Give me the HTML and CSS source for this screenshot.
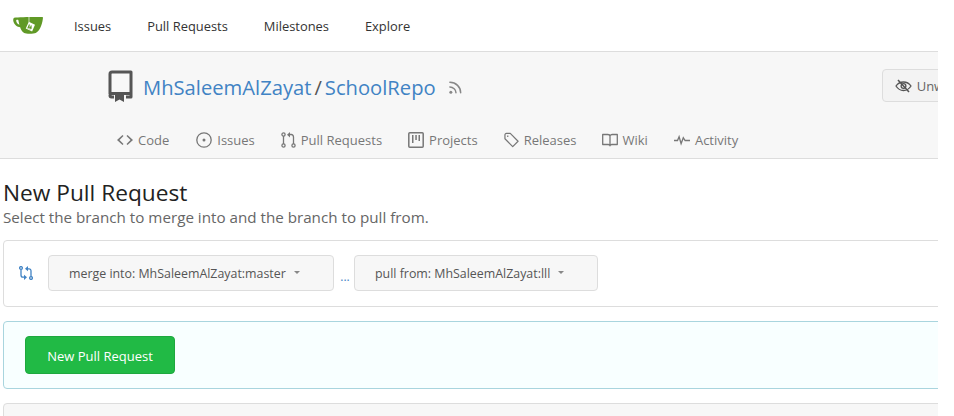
FILE: index.html
```html
<!DOCTYPE html>
<html lang="en">
<head>
<meta charset="utf-8">
<title>New Pull Request</title>
<link rel="stylesheet" href="styles.css">
</head>
<body>
<div class="page">
  <nav class="topbar">
    <svg class="logo" viewBox="0 0 32 20" width="31" height="20">
      <path fill="#609926" d="M1.200 1.600C6 .9 24 .6 31 .9c-.4 5-2.400 13.600-7.500 16.300-2 1-10 1.200-12 0C9 15.700 8 13 7.400 11.300 4.500 10.900 1 8.800.3 4.800.100 3.300.300 2 1.200 1.600z"/>
      <path fill="#fff" d="M3.300 3.800c1-.2 1.800-.1 2.200-.1.200 1.500.700 3.300 1.100 5-2-.5-3.500-2.600-3.300-4.900z"/>
      <path fill="none" stroke="#fff" stroke-width=".7" d="M16.500 0v6"/>
      <path fill="#fff" d="M16.300 5.600l6.400 3-3 7-6.500-3z"/>
      <path fill="none" stroke="#609926" stroke-width="1.200" d="M17 8.500l-1.700 4M19 9.500l-1.700 4M16 10.700l3.500 1.600"/>
    </svg>
    <a class="top-link">Issues</a>
    <a class="top-link">Pull Requests</a>
    <a class="top-link">Milestones</a>
    <a class="top-link">Explore</a>
  </nav>

  <header class="repo-head">
    <div class="repo-row">
      <svg class="repo-icon" viewBox="0 0 26 32" width="26" height="32">
        <path fill="none" stroke="#555" stroke-width="3" stroke-linejoin="round" d="M3 24V4a2 2 0 0 1 2-2h19v25h-5M7 27H4.500A1.500 1.500 0 0 1 3 25.500 2 2 0 0 1 5 23.500h19"/>
        <path fill="#555" d="M8 24h9v8l-4.500-2.500L8 32z"/>
      </svg>
      <h2 class="repo-title"><a class="repo-link">MhSaleemAlZayat</a><span class="slash">/</span><a class="repo-link">SchoolRepo</a></h2>
      <svg class="rss" viewBox="0 0 16 16" width="15" height="15">
        <g fill="none" stroke="#888" stroke-width="1.600" stroke-linecap="round">
          <path d="M2 2.500c6.500 0 11.500 5 11.500 11"/>
          <path d="M2 7.500c3.500 0 6.500 3 6.500 6"/>
        </g>
        <circle cx="3" cy="13" r="1.600" fill="#888"/>
      </svg>
      <button class="watch" type="button">
        <svg viewBox="0 0 17 14" width="17" height="14">
          <g fill="none" stroke="#555" stroke-width="1.300">
            <path d="M1 7s2.800-4 7.500-4S16 7 16 7s-2.800 4.500-7.500 4.500S1 7 1 7z"/>
            <circle cx="8.500" cy="7" r="2.400"/>
            <path d="M3 1l11 12" stroke-width="1.500"/>
          </g>
        </svg>
        <span>Unwatch</span>
      </button>
    </div>
    <div class="tabs">
      <a class="tab"><svg class="tab-icon" viewBox="0 0 16 16" width="16" height="16"><path fill="#777" d="M10.500 3L9.500 4l4 4-4 4 1 1L16 8zM5.500 3L0 8l5.500 5 1-1-4-4 4-4z"/></svg>Code</a>
      <a class="tab"><svg class="tab-icon" viewBox="0 0 16 16" width="16" height="16"><circle cx="8" cy="8" r="7.200" fill="none" stroke="#777" stroke-width="1.300"/><circle cx="8" cy="8" r="1.500" fill="#777"/></svg>Issues</a>
      <a class="tab"><svg class="tab-icon" viewBox="0 0 15 16" width="15" height="16"><g fill="none" stroke="#777" stroke-width="1.300"><circle cx="2.500" cy="2.500" r="1.600"/><circle cx="2.500" cy="13.500" r="1.600"/><circle cx="12.500" cy="13.500" r="1.600"/><path d="M2.500 4v8M12.500 12V5c0-1.500-1-2.500-2.200-2.500H8.500"/></g><path fill="#777" d="M9 0v5.500L6 2.700z"/></svg>Pull Requests</a>
      <a class="tab"><svg class="tab-icon" viewBox="0 0 16 16" width="16" height="16"><rect x=".8" y=".8" width="14.400" height="14.400" rx="1" fill="none" stroke="#777" stroke-width="1.500"/><path d="M4 3h1.500v8H4zM7.300 3h1.500v5H7.300zM10.500 3H12v6h-1.500z" fill="#777"/></svg>Projects</a>
      <a class="tab"><svg class="tab-icon" viewBox="0 0 16 16" width="15" height="16"><path d="M1 2.500A1.500 1.500 0 0 1 2.500 1h4.200L15 9.300 9.300 15 1 6.700zM4 3.300v1.400" fill="none" stroke="#777" stroke-width="1.300" stroke-linejoin="round"/></svg>Releases</a>
      <a class="tab"><svg class="tab-icon" viewBox="0 0 16 16" width="16" height="16"><path d="M.7 2.500h5c1.300 0 2.300.6 2.300 1.800 0-1.200 1-1.800 2.300-1.800h5v10h-5.500c-1 0-1.800.4-1.800 1.300 0-.9-.8-1.300-1.800-1.300H.7zM8 4.300v9.500" fill="none" stroke="#777" stroke-width="1.300" stroke-linejoin="round"/></svg>Wiki</a>
      <a class="tab"><svg class="tab-icon" viewBox="0 0 16 16" width="16" height="16"><path d="M0 8.500h3.500l1.600-3.800 2 7 2.200-6 1.800 2.800H16" fill="none" stroke="#777" stroke-width="1.300"/></svg>Activity</a>
    </div>
  </header>

  <main class="content">
    <h1 class="title">New Pull Request</h1>
    <p class="subtitle">Select the branch to merge into and the branch to pull from.</p>

    <section class="box compare">
      <svg class="compare-icon" viewBox="0 0 14 14" width="14" height="14">
        <g fill="none" stroke="#4183c4" stroke-width="1.300">
          <circle cx="2" cy="2" r="1.400"/><circle cx="12" cy="12" r="1.400"/>
          <path d="M2 3.400V9c0 1.500.8 2.200 2 2.200h1.500M12 10.600V5c0-1.500-.8-2.200-2-2.200H8.500"/>
        </g>
        <path fill="#4183c4" d="M5 8.700V14l3-2.700zM9 0v5.300L6 2.700z"/>
      </svg>
      <button class="branch branch-base" type="button">merge into: MhSaleemAlZayat:master<i class="caret"></i></button>
      <span class="dots">...</span>
      <button class="branch branch-head" type="button">pull from: MhSaleemAlZayat:lll<i class="caret"></i></button>
    </section>

    <section class="box info">
      <button class="primary" type="button">New Pull Request</button>
    </section>

    <section class="box tail"></section>
  </main>
</div>
</body>
</html>
```

FILE: styles.css
```css
* { box-sizing: border-box; }
html, body { margin: 0; padding: 0; background: #fff; }
body { height: 416px; overflow: hidden; font-family: "Open Sans", "Noto Sans", sans-serif; color: #333; }
.page { width: 938px; height: 416px; overflow: hidden; }

.topbar { height: 52px; display: flex; align-items: center; padding: 0 0 0 13px; border-bottom: 1px solid #ddd; background: #fff; }
.logo { margin: 0 30px 0 0; flex: none; }
.top-link { font-size: 12.900px; color: #333; margin-right: 36px; padding-top: 1px; }

.repo-head { height: 107px; background: #f7f7f7; border-bottom: 1px solid #ddd; padding: 18px 0 0 107px; }
.repo-row { display: flex; align-items: center; height: 34px; }
.repo-icon { flex: none; margin-top: -2px; }
.repo-title { margin: 0 0 0 10px; font-size: 20.200px; font-weight: 400; white-space: nowrap; color: #555; }
.repo-link { color: #4183c4; }
.slash { margin: 0 3px; }
.rss { margin-left: 12px; flex: none; }
.watch { margin-left: 419px; margin-top: -3px; flex: none; height: 33px; width: 120px; display: flex; align-items: center; gap: 5px; padding: 0 0 0 12px; background: #f3f3f3; border: 1px solid #ddd; border-radius: 4px; font: inherit; font-size: 13px; color: #666; }

.tabs { display: flex; margin: 27px 0 0 10px; gap: 26px; align-items: center; }
.tab { display: flex; align-items: center; gap: 5px; font-size: 13px; color: #777; }
.tab:first-child { margin-right: 1px; }
.tab:nth-child(5) { margin-right: -1px; }
.tab-icon { flex: none; }

.content { padding: 0 0 0 3px; width: 1100px; }
.title { margin: 20px 0 0 0; font-size: 22.700px; font-weight: 400; line-height: 28px; color: #222; }
.subtitle { margin: 1px 0 0 0; font-size: 15.200px; line-height: 19px; color: #666; }

.box { border: 1px solid #ddd; border-radius: 4px; }
.compare { margin-top: 13px; height: 67px; display: flex; align-items: center; padding-left: 15px; background: #fff; }
.compare-icon { flex: none; margin-right: 15px; margin-top: -1px; }
.branch { height: 36px; margin-top: -1px; display: flex; align-items: center; background: #f7f7f7; border: 1px solid #ddd; border-radius: 4px; font: inherit; font-size: 12.400px; color: #555; padding: 0 0 0 20px; }
.branch-base { width: 286px; }
.branch-head { width: 244px; }
.caret { width: 0; height: 0; margin-left: 8px; margin-top: -2px; border-left: 3.500px solid transparent; border-right: 3.500px solid transparent; border-top: 3.500px solid #888; }
.dots { width: 20px; padding: 6px 0 0 2px; text-align: center; font-size: 12px; color: #4183c4; }

.info { margin-top: 14px; height: 68px; padding: 14px 0 0 21px; background: #f8ffff; border-color: #a9d5de; }
.primary { width: 150px; height: 38px; padding: 1px 0 0; background: #21ba45; border: 1px solid #1ea83e; border-radius: 4px; color: #fff; font: inherit; font-size: 13px; }

.tail { margin-top: 14px; height: 40px; background: #f7f7f7; }
```
